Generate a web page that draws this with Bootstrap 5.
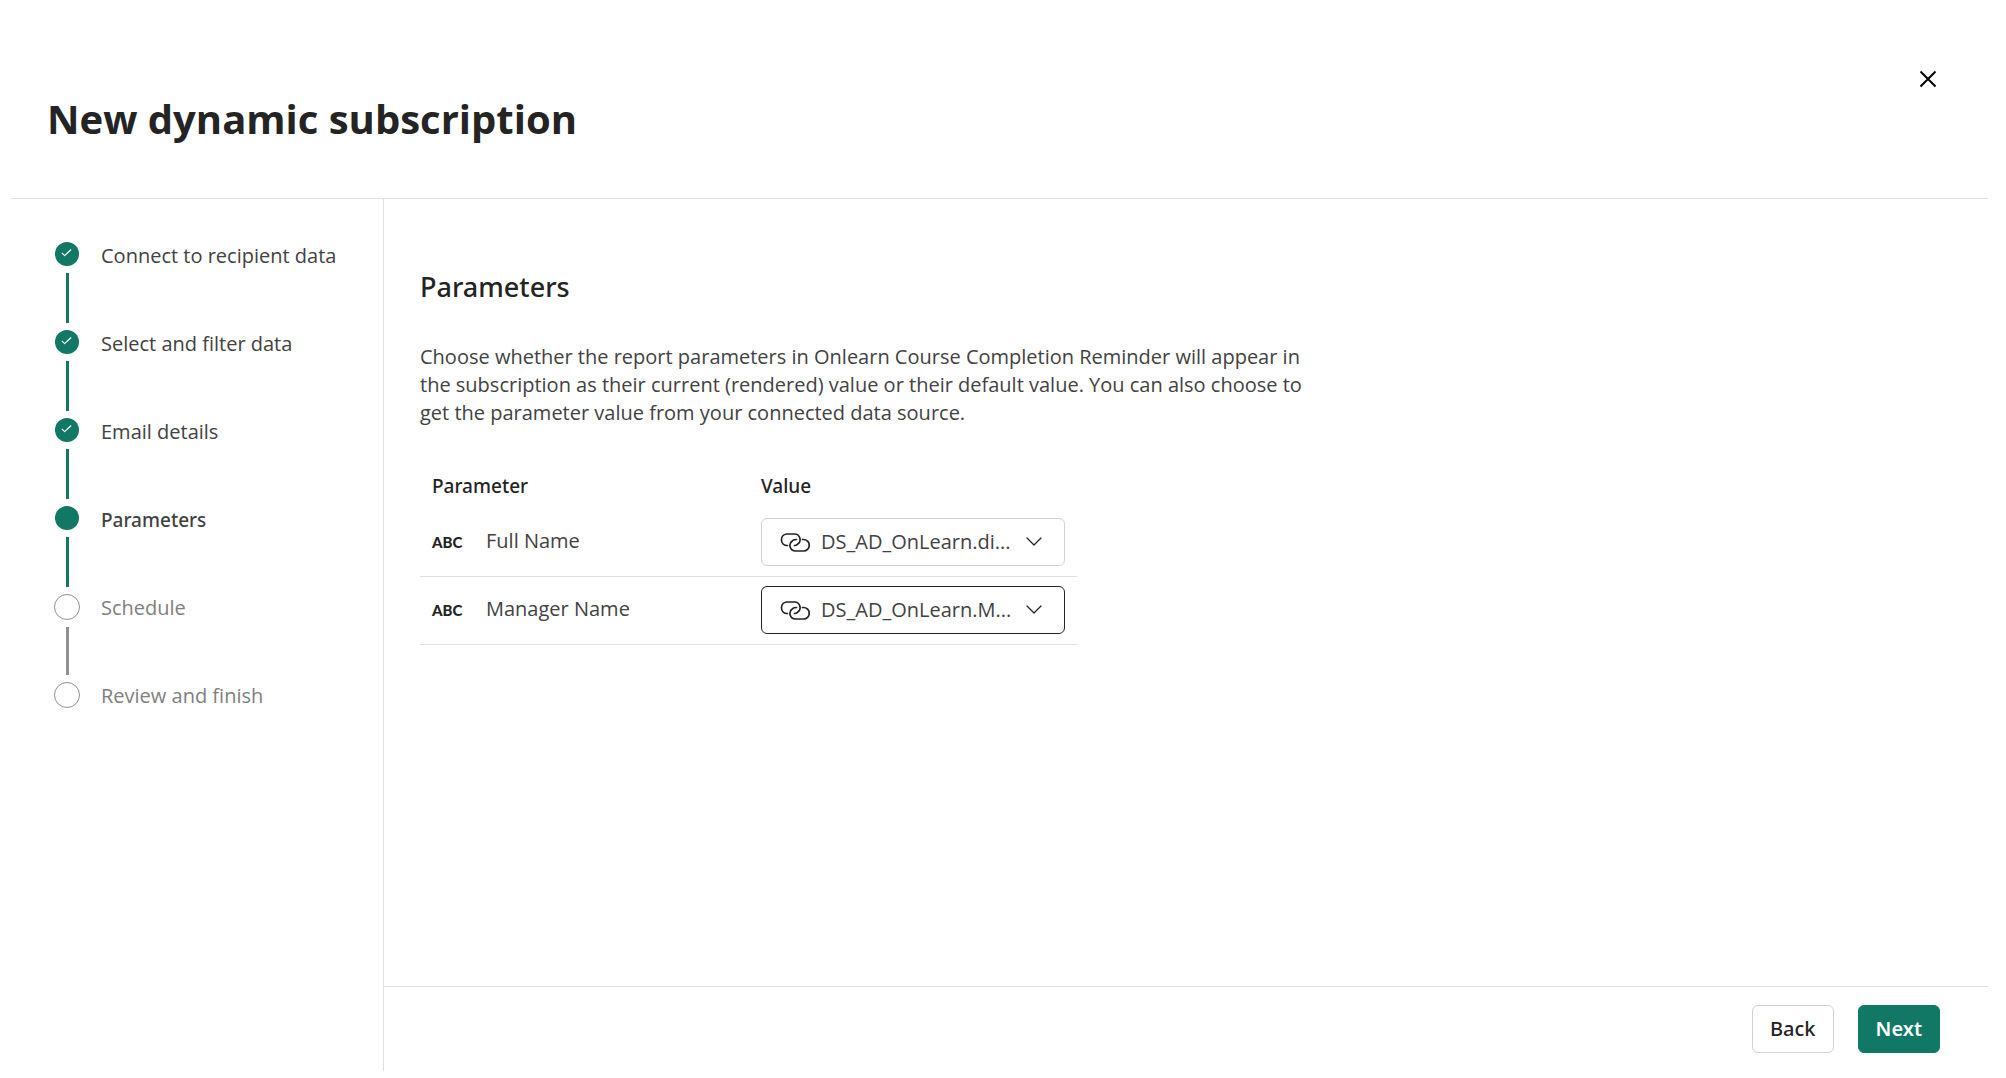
<!DOCTYPE html>
<html lang="en">
<head>
<meta charset="utf-8">
<meta name="viewport" content="width=device-width, initial-scale=1">
<title>New dynamic subscription</title>
<link href="https://cdn.jsdelivr.net/npm/bootstrap@5.3.0/dist/css/bootstrap.min.css" rel="stylesheet">
<style>
  :root { --brand: #117865; --ink: #242424; --ink-soft: #424242; --muted: #808080; --rule: #e0e0e0; --field: #d1d1d1; }
  body { font-family: "Open Sans", "Noto Sans", sans-serif; font-size: 20px; line-height: 28px; color: var(--ink-soft); background: #fff; }
  .page { padding: 0 18px 7px 11px; }
  .rule-b { border-bottom: 1px solid var(--rule); }
  .rule-t { border-top: 1px solid var(--rule); }
  .rule-r { border-right: 1px solid var(--rule); }
  .page-head { height: 199px; padding: 63px 44px 0 36px; }
  .page-title { font-size: 40px; line-height: 56px; font-weight: 700; color: var(--ink); margin: 28px 0 0; }
  .close-btn { width: 32px; height: 32px; color: #000; }
  .medium { font-family: "Noto Sans", sans-serif; font-size: 19px; font-weight: 500; color: var(--ink); }

  .steps-col { width: 373px; padding: 43px 16px 0 43px; }
  .step { display: grid; grid-template-columns: 26px 1fr; column-gap: 21px; height: 88px; }
  .step:last-child { height: 28px; }
  .step-track { display: flex; flex-direction: column; align-items: center; gap: 7px; padding-bottom: 7px; }
  .step-dot { width: 24px; height: 24px; flex: none; border-radius: 50%; background: var(--brand); }
  .step-line { width: 3px; flex: 1; background: var(--brand); }
  .step-label { color: inherit; text-decoration: none; }
  .step.todo { color: var(--muted); }
  .todo .step-dot { width: 26px; height: 26px; background: #fff; border: 1px solid #919191; }
  .todo .step-line { background: #919191; }

  .main-body { padding: 70px 36px 0; }
  .section-title { font-size: 27px; line-height: 36px; margin: 0 0 38px; }
  .intro { max-width: 888px; margin: 0 0 46px; }
  .param-table { width: 657px; }
  .param-table th, .param-table td { padding: 0 12px; vertical-align: middle; }
  .param-table thead th { padding-bottom: 10px; line-height: 26px; }
  .param-table tbody td { padding-top: 9px; padding-bottom: 10px; border-bottom: 1px solid var(--rule); }
  .param-table .name-col { width: 329px; }
  .abc { width: 54px; font-family: Lato, sans-serif; font-size: 15px; line-height: 30px; font-weight: 900; color: var(--ink); }
  .picker { height: 48px; border: 1px solid var(--field); border-radius: 6px; padding: 0 22px 0 18px; color: var(--ink); }
  .picker.current { border-color: var(--ink); }
  .picker select { flex: 1; min-width: 0; appearance: none; border: 0; outline: 0; padding: 0; margin: 0 10px 0 11px; background: transparent; color: var(--ink-soft); text-overflow: ellipsis; }

  .page-foot { padding: 18px 48px; gap: 24px; }
  .foot-btn { --bs-btn-font-size: 20px; --bs-btn-line-height: 28px; --bs-btn-padding-y: 9px; --bs-btn-padding-x: 17px; --bs-btn-border-radius: 6px; font-family: "Noto Sans", sans-serif; }
  .btn-back { --bs-btn-color: var(--ink); --bs-btn-border-color: var(--field); --bs-btn-font-weight: 500; --bs-btn-hover-border-color: #b0b0b0; }
  .btn-next { --bs-btn-color: #fff; --bs-btn-bg: var(--brand); --bs-btn-border-color: var(--brand); --bs-btn-font-weight: 600; --bs-btn-hover-bg: #0c695a; --bs-btn-hover-color: #fff; }
</style>
</head>
<body>
<svg class="d-none" aria-hidden="true">
  <symbol id="tick" viewBox="0 0 24 24"><path d="M7.200 11.300l2.500 2.300 6.100-5.800" fill="none" stroke="#fff" stroke-width="1.200" stroke-linecap="round" stroke-linejoin="round"/></symbol>
  <symbol id="chain" viewBox="0 0 30 20"><path d="M7.500 13.500H6.500A5.800 5.800 0 0 1 6.500 2H14.500A5.600 5.600 0 0 1 17.500 12.300Q16.200 13.500 14.500 13.500M22.500 7.500H23.500A5.700 5.700 0 0 1 23.500 19H15.500A5.600 5.600 0 0 1 12.500 8.700Q14 7.500 16.500 7.500" fill="none" stroke="currentColor" stroke-width="1.700" stroke-linecap="round"/></symbol>
  <symbol id="chevron" viewBox="0 0 16 10"><path d="M1 1l7 7 7-7" fill="none" stroke="currentColor" stroke-width="1.300" stroke-linecap="round" stroke-linejoin="round"/></symbol>
</svg>

<div class="page min-vh-100 d-flex flex-column">
  <header class="page-head rule-b d-flex justify-content-between align-items-start">
    <h1 class="page-title">New dynamic subscription</h1>
    <button type="button" class="close-btn btn p-0 border-0 d-flex align-items-center justify-content-center" aria-label="Close">
      <svg width="18" height="18" viewBox="0 0 18 18"><path d="M1.500 1.500l15 15M16.500 1.500l-15 15" stroke="currentColor" stroke-width="2"/></svg>
    </button>
  </header>

  <div class="d-flex flex-grow-1">
    <nav class="steps-col rule-r flex-shrink-0" aria-label="Steps">
      <ol class="list-unstyled m-0">
        <li class="step"><div class="step-track"><svg class="step-dot"><use href="#tick"/></svg><span class="step-line"></span></div><a href="#" class="step-label">Connect to recipient data</a></li>
        <li class="step"><div class="step-track"><svg class="step-dot"><use href="#tick"/></svg><span class="step-line"></span></div><a href="#" class="step-label">Select and filter data</a></li>
        <li class="step"><div class="step-track"><svg class="step-dot"><use href="#tick"/></svg><span class="step-line"></span></div><a href="#" class="step-label">Email details</a></li>
        <li class="step"><div class="step-track"><span class="step-dot"></span><span class="step-line"></span></div><a href="#" class="step-label medium" aria-current="step">Parameters</a></li>
        <li class="step todo"><div class="step-track"><span class="step-dot"></span><span class="step-line"></span></div><span class="step-label">Schedule</span></li>
        <li class="step todo"><div class="step-track"><span class="step-dot"></span></div><span class="step-label">Review and finish</span></li>
      </ol>
    </nav>

    <div class="d-flex flex-column flex-grow-1">
      <main class="main-body flex-grow-1">
        <h2 class="section-title medium">Parameters</h2>
        <p class="intro">Choose whether the report parameters in Onlearn Course Completion Reminder will appear in the subscription as their current (rendered) value or their default value. You can also choose to get the parameter value from your connected data source.</p>
        <table class="param-table">
          <thead>
            <tr><th class="name-col medium" scope="col">Parameter</th><th class="medium" scope="col">Value</th></tr>
          </thead>
          <tbody>
            <tr>
              <td><div class="d-flex"><span class="abc">ABC</span><label for="full-name">Full Name</label></div></td>
              <td>
                <div class="picker d-flex align-items-center">
                  <svg width="30" height="20"><use href="#chain"/></svg>
                  <select id="full-name"><option>DS_AD_OnLearn.di...</option></select>
                  <svg width="16" height="10"><use href="#chevron"/></svg>
                </div>
              </td>
            </tr>
            <tr>
              <td><div class="d-flex"><span class="abc">ABC</span><label for="manager-name">Manager Name</label></div></td>
              <td>
                <div class="picker current d-flex align-items-center">
                  <svg width="30" height="20"><use href="#chain"/></svg>
                  <select id="manager-name"><option>DS_AD_OnLearn.M...</option></select>
                  <svg width="16" height="10"><use href="#chevron"/></svg>
                </div>
              </td>
            </tr>
          </tbody>
        </table>
      </main>
      <footer class="page-foot rule-t d-flex justify-content-end">
        <button type="button" class="btn foot-btn btn-back">Back</button>
        <button type="button" class="btn foot-btn btn-next">Next</button>
      </footer>
    </div>
  </div>
</div>
<script src="https://cdn.jsdelivr.net/npm/bootstrap@5.3.0/dist/js/bootstrap.bundle.min.js"></script>
</body>
</html>
